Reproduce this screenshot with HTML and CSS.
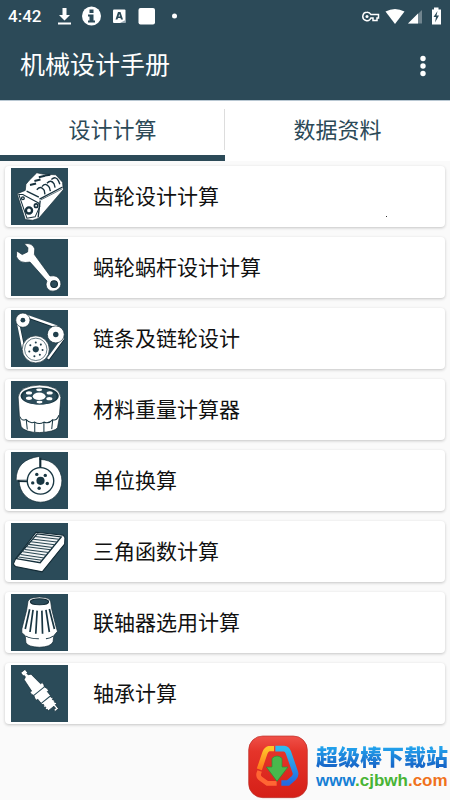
FILE: index.html
```html
<!DOCTYPE html>
<html lang="zh-CN">
<head>
<meta charset="utf-8">
<meta name="viewport" content="width=device-width, initial-scale=1">
<title>机械设计手册</title>
<link rel="stylesheet" href="styles.css">
</head>
<body>
<header class="top">
  <div class="status">
    <span class="time">4:42</span>
    <svg class="status-left" width="122" height="20" viewBox="0 0 122 20" fill="#fff" aria-hidden="true">
      <path d="M5.500 2h4v7h3.500l-5.500 5.500L2 9h3.500zM1 16.500h13v2H1z"/>
      <circle cx="34.500" cy="10" r="9.500"/>
      <path d="M32.500 3.500h4v3.500h-4zM31 8.500h5.500v6H38v2h-7v-2h1.500v-4H31z" fill="#2c4a58"/>
      <rect x="56" y="3.500" width="12.500" height="13.500" rx="1"/>
      <path d="M58.500 13.500l2.500-7.500h2.500l2.500 7.500h-2l-.5-1.500H61l-.5 1.500zM61.500 10.500h1.500l-.7-2.500z" fill="#2c4a58"/>
      <path d="M63 17h5.500v-3z" fill="#9aabb5"/>
      <rect x="81.500" y="2" width="16.500" height="16.500" rx="2"/>
      <circle cx="117.500" cy="10" r="2.500"/>
    </svg>
    <svg class="status-right" width="80" height="20" viewBox="0 0 80 20" fill="#fff" aria-hidden="true">
      <path d="M5 6.200a4.200 4.200 0 1 0 3.900 5.800h2.100v2.500h4V12h1.500V8.500H8.900A4.200 4.200 0 0 0 5 6.200z" fill="none" stroke="#fff" stroke-width="1.500"/>
      <circle cx="5" cy="10.400" r="1.500"/>
      <path d="M23.500 5.500Q33 .5 42.500 5.500L33 18z"/>
      <path d="M46 17.500L60 4v13.500z" fill="#71858f"/>
      <path d="M46 17.500L56 7.500v10z"/>
      <path d="M70 3.500h2V1.500h4.500v2h2.500v15h-9z"/>
      <path d="M75.500 5l-4 6h2.500l-1 5.500 4-7h-2.500z" fill="#2c4a58"/>
    </svg>
  </div>
  <div class="appbar">
    <h1>机械设计手册</h1>
    <button class="more" type="button" aria-label="更多">
      <svg width="6" height="22" viewBox="0 0 6 22" fill="#fff"><circle cx="3" cy="3.500" r="2.700"/><circle cx="3" cy="11" r="2.700"/><circle cx="3" cy="18.500" r="2.700"/></svg>
    </button>
  </div>
</header>
<nav class="tabs">
  <button class="tab active" type="button">设计计算</button>
  <button class="tab" type="button">数据资料</button>
</nav>
<main class="list">
  <a class="card first" href="#gear">
    <svg class="icon" viewBox="34 24 168 168" aria-hidden="true">
      <path d="M52 100L76 90 78 72 88 60 110 38 128 42 166 44 186 66 188 88 152 130 116 172 98 178 76 176z" fill="#fff" stroke="#112934" stroke-width="2"/>
      <path d="M118 116L186 80M120 120L114 170M80 92L116 110" fill="none" stroke="#17313d" stroke-width="4"/>
      <path d="M122 118L184 86" fill="none" stroke="#17313d" stroke-width="2"/>
      <path d="M90 74l18-4M103 62l18-4M116 51l18-4M134 46l16-2" fill="none" stroke="#17313d" stroke-width="6"/>
      <path d="M110 88q12-14 22 2l2 12M125 79q12-14 22 2l3 11M140 69q12-13 21 2l3 11M153 58q13-12 21 4l4 10" fill="none" stroke="#17313d" stroke-width="4"/>
      <path d="M57 102L69 102 115 127 119 137 105 168 81 172z" fill="none" stroke="#17313d" stroke-width="3"/>
      <g fill="#fff" stroke="#17313d"><circle cx="87" cy="149" r="9" stroke-width="7"/><circle cx="108" cy="135" r="5" stroke-width="5"/><circle cx="69" cy="113" r="4" stroke-width="4"/></g>
    </svg>
    <span>齿轮设计计算</span>
  </a>
  <a class="card" href="#worm">
    <svg class="icon" viewBox="34 22 168 168" aria-hidden="true">
      <path d="M73 36q24-4 31 15l-1 17 46 63q24-4 31 16 5 18-13 27-20 6-28-10-4-9 1-18L90 90q-31 6-40-16l1-17 16 11 16-8 1-12z" fill="#fff" stroke="#132e3a" stroke-width="2"/>
      <circle cx="161" cy="155" r="10" fill="#2b4b59" stroke="#112934" stroke-width="3"/>
    </svg>
    <span>蜗轮蜗杆设计计算</span>
  </a>
  <a class="card" href="#chain">
    <svg class="icon" viewBox="34 27 168 168" aria-hidden="true">
      <g fill="none" stroke="#112934" stroke-width="9"><path d="M75 44l96 34M55 64l18 85M188 112l-45 62"/></g>
      <g fill="none" stroke="#fff" stroke-width="7"><path d="M74 42l96 34M54 62l17 83M188 110l-45 61"/></g>
      <g fill="#fff" stroke="#112934" stroke-width="2"><circle cx="69" cy="57" r="21"/><circle cx="166" cy="99" r="25"/><circle cx="107" cy="143" r="40"/></g>
      <g fill="#203f4c"><circle cx="69" cy="57" r="7"/><circle cx="166" cy="99" r="8"/><circle cx="107" cy="143" r="9"/>
      <circle cx="107" cy="123" r="3"/><circle cx="122" cy="129" r="3"/><circle cx="127" cy="145" r="3"/><circle cx="119" cy="159" r="3"/><circle cx="103" cy="163" r="3"/><circle cx="88" cy="149" r="3"/><circle cx="91" cy="131" r="3"/></g>
      <circle cx="107" cy="143" r="33" fill="none" stroke="#203f4c" stroke-width="2"/>
    </svg>
    <span>链条及链轮设计</span>
  </a>
  <a class="card" href="#weight">
    <svg class="icon" viewBox="34 24 168 168" aria-hidden="true">
      <path d="M55 71q4-33 63-35 58 1 63 36l-5 62-5 28q-9 12-53 14-42 0-54-17l-5-28z" fill="#fff" stroke="#112934" stroke-width="2"/>
      <path d="M62 68c2-33 111-34 113 0-2 34-110 34-113 0z" fill="#193743"/>
      <ellipse cx="118" cy="70" rx="50" ry="23" fill="#2b4b59"/>
      <g fill="#fff"><ellipse cx="117" cy="69" rx="19" ry="11"/><ellipse cx="117" cy="50" rx="9" ry="4"/><ellipse cx="118" cy="86" rx="9" ry="4"/><ellipse cx="87" cy="59" rx="9" ry="5"/><ellipse cx="148" cy="59" rx="9" ry="5"/><ellipse cx="87" cy="75" rx="9" ry="5"/><ellipse cx="147" cy="76" rx="9" ry="5"/></g>
      <path d="M60 129q7 15 18 8 12 14 26 8 13 9 27 0 14 7 26-7 13 4 18-13M79 138l3 29M104 145v29M131 145v29M157 138l-3 28" fill="none" stroke="#193743" stroke-width="3"/>
    </svg>
    <span>材料重量计算器</span>
  </a>
  <a class="card" href="#unit">
    <svg class="icon" viewBox="34 25 168 168" aria-hidden="true">
      <circle cx="121" cy="110" r="63" fill="#fff" stroke="#112934" stroke-width="2"/>
      <path d="M49 108q0-61 69-70v33q-29 6-35 37z" fill="#fff" stroke="#132e3a" stroke-width="2"/>
      <path d="M121 42v30M54 111l30 1" stroke="#112934" stroke-width="5"/>
      <circle cx="121" cy="110" r="39" fill="#fff" stroke="#193743" stroke-width="4"/>
      <g fill="#193743"><circle cx="121" cy="110" r="12"/><circle cx="110" cy="91" r="5"/><circle cx="135" cy="94" r="5"/><circle cx="141" cy="118" r="5"/><circle cx="117" cy="132" r="5"/><circle cx="98" cy="116" r="5"/></g>
    </svg>
    <span>单位换算</span>
  </a>
  <a class="card" href="#trig">
    <svg class="icon" viewBox="34 27 168 168" aria-hidden="true">
      <path d="M108 54l80 9 5 7-1 19-66 82-79-16-6-7 6-14z" fill="#fff" stroke="#112934" stroke-width="3"/>
      <path d="M111 59l71 9-62 76-71-12z" fill="#f4f6f7" stroke="#132e3a" stroke-width="4"/>
      <path d="M105 67l70 8M99 75l70 8M93 82l70 9M87 90l70 9M81 97l70 9M75 105l70 9M69 112l70 10M62 120l70 10M56 127l69 10" stroke="#294652" stroke-width="3"/>
    </svg>
    <span>三角函数计算</span>
  </a>
  <a class="card" href="#coupling">
    <svg class="icon" viewBox="34 22 168 168" aria-hidden="true">
      <path d="M84 44q3-12 34-13 31 1 33 14l3 22 14 56 3 9-11 13-2 18q-7 15-40 16-35-1-40-14l-2-20-10-9v-11l14-55z" fill="#fff" stroke="#112934" stroke-width="2"/>
      <ellipse cx="118" cy="45" rx="27" ry="9" fill="#2b4b59" stroke="#112934" stroke-width="3"/>
      <path d="M89 67l-13 58M99 69l-9 65M111 71l-4 68M125 71l2 68M137 69l10 65M147 66l15 59" stroke="#183541" stroke-width="5"/>
      <path d="M78 146q14 8 38 8M158 146q-8 6-21 8" stroke="#183541" stroke-width="3" fill="none"/>
    </svg>
    <span>联轴器选用计算</span>
  </a>
  <a class="card" href="#bearing">
    <svg class="icon" viewBox="34 22 168 168" aria-hidden="true">
      <g transform="translate(69 40) rotate(-39)">
        <path d="M-8 0H8V12H5V18L13 22 17 62H23V70L20 76 23 84V92H18V108H16V114H18V119H15V123H18V128H15V132H17V137H12V152H-1V146H6V138H-15V132H-18V127H-15V123H-18V118H-15V113H-18V92H-23V84L-20 76-23 70V62H-17L-13 22-5 18V12H-8z" fill="#fff" stroke="#132e3a" stroke-width="2"/>
        <path d="M-20 76H20M-18 108H18" stroke="#2b4b59" stroke-width="3"/>
      </g>
    </svg>
    <span>轴承计算</span>
  </a>
</main>
<aside class="brand">
  <svg width="60" height="64" viewBox="0 0 180 192" aria-hidden="true">
    <defs>
      <linearGradient id="red" x2="0" y2="1"><stop stop-color="#ef5149"/><stop offset=".25" stop-color="#e5342a"/><stop offset="1" stop-color="#d51f17"/></linearGradient>
      <linearGradient id="blue" x2="0" y2="1"><stop stop-color="#30baf0"/><stop offset="1" stop-color="#236be0"/></linearGradient>
      <linearGradient id="orange" x2="0" y2="1"><stop stop-color="#ffc52a"/><stop offset="1" stop-color="#ff751c"/></linearGradient>
    </defs>
    <rect x="2" y="3" width="176" height="185" rx="42" fill="url(#red)" stroke="#bb2d27" stroke-width="2"/>
    <path d="M78 41H63Q55 43 51 53L34 103" fill="none" stroke="url(#orange)" stroke-width="16"/>
    <path d="M35 108l-3 8q-2 9 6 15l20 14h28" fill="none" stroke="#ff6633" stroke-width="14"/>
    <path d="M82 41h26q9 1 13 11l21 60q3 9-5 17l-17 15h-20" fill="none" stroke="url(#blue)" stroke-width="17"/>
    <path d="M72 70q15-14 30 0v26h18l-33 43-32-43h17z" fill="#49b84c" stroke="#278e35" stroke-width="2"/>
  </svg>
  <div class="brand-text">
    <strong>超级棒下载站</strong>
    <span class="url"><span class="blue">www</span><span class="green">.cjbwh</span><span class="orange">.com</span></span>
  </div>
</aside>
</body>
</html>
```
FILE: styles.css
```css
* { box-sizing: border-box; }
body {
  margin: 0;
  min-height: 100vh;
  position: relative;
  background: #fafafa;
  color: #111;
  font-family: Roboto, "Noto Sans CJK SC", sans-serif;
}
button { border: 0; padding: 0; background: none; font: inherit; color: inherit; }
svg { display: block; flex: none; }
.top { background: #2c4a58; color: #fff; border-bottom: 1px solid #b9c8d3; }
.status { display: flex; align-items: center; height: 32px; padding: 0 8px; }
.time { width: 49px; font-size: 17px; font-weight: 500; line-height: 20px; }
.status-right { margin-left: auto; }
.appbar { display: flex; align-items: center; justify-content: space-between; height: 68px; padding: 0 24px 0 20px; }
h1 { margin: 0; font-size: 25px; font-weight: 400; line-height: 36px; }
.more { display: flex; padding: 0; }
.tabs { display: flex; height: 60px; background: #fff; color: #2c4a58; }
.tab { position: relative; flex: 1; padding-top: 6px; font-size: 22px; line-height: 32px; border-bottom: 6px solid transparent; }
.tab.active { border-bottom-color: #2c4a58; }
.tab.active::after { content: ""; position: absolute; right: 0; top: 8px; height: 41px; width: 1px; background: #ddd; }
.list { display: grid; gap: 10px; padding: 5px 5px 72px; }
.card {
  display: flex;
  align-items: center;
  gap: 25px;
  height: 61px;
  padding: 0 6px;
  border-radius: 4px;
  background: #fff;
  box-shadow: 0 1px 3px #c4c4c4;
  color: inherit;
  font-size: 21px;
  line-height: 30px;
  text-decoration: none;
}
.icon { width: 57px; height: 57px; background: #2b4b59; }
.first { position: relative; }
.first::after { content: ""; position: absolute; right: 58px; bottom: 10px; width: 1px; height: 1px; background: #333; }
.brand { position: absolute; right: 2px; bottom: 1px; display: flex; align-items: center; gap: 8px; }
.brand-text { display: flex; flex-direction: column; }
.brand strong {
  font-family: "Noto Sans CJK SC", sans-serif;
  font-size: 22px;
  font-weight: 900;
  line-height: 28px;
  color: transparent;
  background: linear-gradient(#23a5ee 20%, #1766c8 90%);
  -webkit-background-clip: text;
  background-clip: text;
}
.url { font: bold 17px/24px "Liberation Sans", sans-serif; }
.blue { color: #167fd5; }
.green { color: #48b435; }
.orange { color: #f0721c; }
```
